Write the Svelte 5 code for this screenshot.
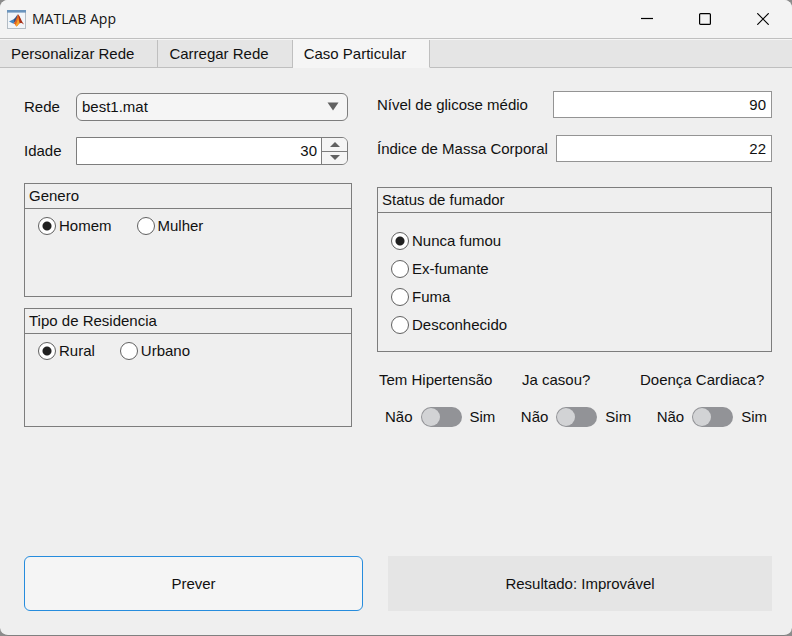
<script>
  const tabs = ['Personalizar Rede', 'Carregar Rede', 'Caso Particular'];
  const statuses = ['Nunca fumou', 'Ex-fumante', 'Fuma', 'Desconhecido'];
  const questions = [
    { id: 'hipertensao', text: 'Tem Hipertensão' },
    { id: 'casou', text: 'Ja casou?' },
    { id: 'cardiaca', text: 'Doença Cardiaca?' }
  ];

  let activeTab = $state('Caso Particular');
  let network = $state('best1.mat');
  let age = $state(30);
  let glucose = $state(90);
  let bmi = $state(22);
  let gender = $state('Homem');
  let residence = $state('Rural');
  let smoking = $state('Nunca fumou');
  let answers = $state({ hipertensao: false, casou: false, cardiaca: false });
</script>

<div class="window">
  <header class="titlebar">
    <svg class="logo" width="19" height="19" viewBox="0 0 19 19" aria-hidden="true">
      <rect x="0.5" y="0.5" width="18" height="18" fill="#f1f5f9" stroke="#b3bcc4" />
      <rect x="0" y="0" width="19" height="2.6" fill="#6a94bd" />
      <path d="M2 11.6 L6.6 9.2 L8.4 11 L6.5 13.8 L4.6 12.8Z" fill="#3f86c4" />
      <path d="M6.6 9.2 C8.4 8.4 9.2 5.6 11 4.2 L9.6 10.4 L7.4 12.8Z" fill="#38507e" />
      <path d="M11 4.2 C9.8 7.2 9 10.6 6.5 13.8 C7.8 13.2 8.4 15 9.4 16.6 C11.6 15.4 11.8 12.8 13.6 13 L12.8 7Z" fill="#e0601f" />
      <path d="M11 4.2 C12.8 5.4 14.4 11.2 17.2 14.6 C15.4 13.2 14.2 12.6 13 13.2 C12 10 12 7.2 11 4.2Z" fill="#a83018" />
      <path d="M11 7 C10.8 10.4 9.8 12.8 8.6 15 L9.4 16.6 C11.2 15.4 11.6 13.8 12.4 13.2Z" fill="#f6a52c" />
    </svg>
    <h1>MATLAB App</h1>
    <div class="controls">
      <button type="button" aria-label="Minimizar">
        <svg width="12" height="12" viewBox="0 0 12 12"><path d="M0 5.5H12" /></svg>
      </button>
      <button type="button" aria-label="Maximizar">
        <svg width="12" height="12" viewBox="0 0 12 12"><rect x="0.6" y="0.6" width="10.8" height="10.8" rx="1" /></svg>
      </button>
      <button type="button" aria-label="Fechar">
        <svg width="12" height="12" viewBox="0 0 12 12"><path d="M0.3 0.3L11.7 11.7M11.7 0.3L0.3 11.7" /></svg>
      </button>
    </div>
  </header>

  <div class="tabs" role="tablist">
    {#each tabs as tab}
      <button type="button" role="tab" class="tab" class:active={tab === activeTab}
        aria-selected={tab === activeTab} onclick={() => (activeTab = tab)}>{tab}</button>
    {/each}
    <div class="tab-rest"></div>
  </div>

  <main>
    <div class="columns">
      <div class="left">
        <div class="fields">
          <div class="field narrow">
            <label for="rede">Rede</label>
            <div class="dropdown">
              <select id="rede" bind:value={network}>
                <option>best1.mat</option>
              </select>
              <svg width="12" height="9" viewBox="0 0 12 9" aria-hidden="true"><path d="M0.5 0.5H11.5L6 8.5Z" /></svg>
            </div>
          </div>
          <div class="field narrow">
            <label for="idade">Idade</label>
            <div class="spinner">
              <input id="idade" type="number" bind:value={age} />
              <div class="steps">
                <button type="button" aria-label="Aumentar" onclick={() => age++}>
                  <svg width="10" height="5" viewBox="0 0 10 5"><path d="M0 5L5 0L10 5Z" /></svg>
                </button>
                <button type="button" aria-label="Diminuir" onclick={() => age--}>
                  <svg width="10" height="5" viewBox="0 0 10 5"><path d="M0 0L5 5L10 0Z" /></svg>
                </button>
              </div>
            </div>
          </div>
        </div>

        <section class="panel gender" role="radiogroup" aria-labelledby="t-genero">
          <h2 id="t-genero">Genero</h2>
          <div class="options">
            {#each ['Homem', 'Mulher'] as g}
              <label class="option"><input type="radio" name="genero" value={g} bind:group={gender} />{g}</label>
            {/each}
          </div>
        </section>

        <section class="panel residence" role="radiogroup" aria-labelledby="t-residencia">
          <h2 id="t-residencia">Tipo de Residencia</h2>
          <div class="options">
            {#each ['Rural', 'Urbano'] as r}
              <label class="option"><input type="radio" name="residencia" value={r} bind:group={residence} />{r}</label>
            {/each}
          </div>
        </section>
      </div>

      <div class="right">
        <div class="fields">
          <div class="field wide">
            <label for="glicose">Nível de glicose médio</label>
            <input id="glicose" type="number" bind:value={glucose} />
          </div>
          <div class="field wide">
            <label for="imc">Índice de Massa Corporal</label>
            <input id="imc" type="number" bind:value={bmi} />
          </div>
        </div>

        <section class="panel smoking" role="radiogroup" aria-labelledby="t-status">
          <h2 id="t-status">Status de fumador</h2>
          <div class="options stacked">
            {#each statuses as s}
              <label class="option"><input type="radio" name="status" value={s} bind:group={smoking} />{s}</label>
            {/each}
          </div>
        </section>

        <div class="questions">
          {#each questions as q}
            <label for={q.id}>{q.text}</label>
          {/each}
        </div>
        <div class="switches">
          {#each questions as q}
            <div class="switch">
              <span>Não</span>
              <input id={q.id} type="checkbox" role="switch" bind:checked={answers[q.id]} />
              <span>Sim</span>
            </div>
          {/each}
        </div>
      </div>
    </div>

    <div class="actions">
      <button type="button" class="predict">Prever</button>
      <output class="result">Resultado: Improvável</output>
    </div>
  </main>
</div>

<style>
  :global(body) {
    margin: 0;
    background: #8c8c8c;
  }

  .window,
  .window * {
    box-sizing: border-box;
  }

  .window {
    display: flex;
    flex-direction: column;
    min-height: 100vh;
    overflow: hidden;
    border-bottom: 1px solid #808080;
    border-radius: 8px;
    background: #efefef;
    color: #111;
    font: 15px/18px "Liberation Sans", Arial, sans-serif;
  }

  button,
  input,
  select {
    margin: 0;
    padding: 0;
    border: 0;
    border-radius: 0;
    background: none;
    color: inherit;
    font: inherit;
  }

  h1,
  h2 {
    margin: 0;
    font-weight: 400;
  }

  /* Title bar */
  .titlebar {
    display: flex;
    align-items: center;
    height: 38px;
    padding-left: 7px;
    background: #f3f3f3;
  }

  .titlebar h1 {
    margin-left: 6px;
    font: 14px/20px "Segoe UI", "Open Sans", sans-serif;
  }

  .controls {
    display: flex;
    align-self: stretch;
    margin-left: auto;
  }

  .controls button {
    display: grid;
    place-items: center;
    width: 58px;
  }

  .controls svg {
    fill: none;
    stroke: #000;
    stroke-width: 1.2;
  }

  /* Tabs */
  .tabs {
    display: flex;
    height: 30px;
    padding-top: 1px;
    border-top: 1px solid #bfbfbf;
    background: #f5f5f5;
  }

  .tab,
  .tab-rest {
    border-bottom: 1px solid #bfbfbf;
    background: #e5e5e5;
  }

  .tab {
    padding: 0 23px 0 11px;
    border-right: 1px solid #bfbfbf;
    white-space: nowrap;
  }

  .tab.active {
    border-bottom-color: #f5f5f5;
    background: #f5f5f5;
  }

  .tab-rest {
    flex: 1;
  }

  main {
    display: flex;
    flex: 1;
    flex-direction: column;
    padding: 23px 20px 24px 24px;
  }

  .columns {
    display: grid;
    grid-template-columns: 328fr 395fr;
    gap: 25px;
  }

  .left {
    padding-top: 2px;
  }

  /* Fields */
  .fields {
    display: flex;
    flex-direction: column;
    gap: 16px;
  }

  .right .fields {
    gap: 17px;
  }

  .field {
    display: flex;
    align-items: center;
  }

  .narrow {
    padding-right: 4px;
  }

  .narrow label {
    width: 52px;
  }

  .wide {
    gap: 8px;
  }

  .wide label {
    min-width: 168px;
    white-space: nowrap;
  }

  .wide input {
    flex: 1;
    min-width: 0;
    height: 27px;
    padding: 0 5px;
    border: 1px solid #949494;
  }

  input[type='number'] {
    appearance: textfield;
    background: #fff;
    text-align: right;
  }

  input[type='number']::-webkit-inner-spin-button {
    display: none;
  }

  .dropdown {
    position: relative;
    flex: 1;
  }

  select {
    display: block;
    width: 100%;
    height: 28px;
    padding: 0 24px 0 5px;
    border: 1px solid #7d7d7d;
    border-radius: 6px;
    appearance: none;
    background: #f5f5f5;
  }

  .dropdown svg {
    position: absolute;
    top: 9px;
    right: 9px;
    fill: #616161;
    pointer-events: none;
  }

  .spinner {
    display: flex;
    flex: 1;
    height: 28px;
    overflow: hidden;
    border: 1px solid #7d7d7d;
    border-radius: 0 6px 6px 0;
  }

  .spinner input {
    flex: 1;
    min-width: 0;
    padding-right: 4px;
  }

  .steps {
    display: flex;
    flex-direction: column;
    width: 26px;
    border-left: 1px solid #7d7d7d;
    background: #f5f5f5;
  }

  .steps button {
    display: grid;
    flex: 1;
    place-items: center;
  }

  .steps button + button {
    border-top: 1px solid #7d7d7d;
  }

  .steps svg {
    fill: #616161;
  }

  /* Panels */
  .panel {
    border: 1px solid #7d7d7d;
  }

  .panel h2 {
    height: 25px;
    padding: 3px 4px;
    border-bottom: 1px solid #7d7d7d;
    font-size: 15px;
    line-height: 18px;
  }

  .gender {
    min-height: 114px;
    margin-top: 18px;
  }

  .residence {
    min-height: 119px;
    margin-top: 11px;
  }

  .smoking {
    min-height: 165px;
    margin-top: 25px;
  }

  .options {
    display: flex;
    gap: 25px;
    padding: 8px 13px;
  }

  .options.stacked {
    flex-direction: column;
    align-items: flex-start;
    gap: 10px;
    padding-top: 19px;
  }

  .option {
    display: flex;
    align-items: center;
    gap: 3px;
  }

  input[type='radio'] {
    width: 18px;
    height: 18px;
    border: 1px solid #616161;
    border-radius: 50%;
    appearance: none;
    background: #fff;
  }

  input[type='radio']:checked {
    background: radial-gradient(circle, #212121 4px, #fff 5px);
  }

  /* Switches */
  .questions {
    display: grid;
    grid-template-columns: 143fr 118fr 125fr;
    margin-top: 19px;
    padding: 0 7px 0 2px;
    white-space: nowrap;
  }

  .switches {
    display: flex;
    justify-content: space-between;
    margin-top: 18px;
    padding: 0 5px 0 8px;
  }

  .switch {
    display: flex;
    align-items: center;
    gap: 8px;
  }

  .switch input {
    width: 41px;
    height: 20px;
    padding: 1px;
    border-radius: 10px;
    appearance: none;
    background: #929397;
  }

  .switch input::before {
    display: block;
    width: 18px;
    height: 18px;
    border-radius: 50%;
    background: #d2d3d5;
    content: '';
  }

  .switch input:checked::before {
    margin-left: auto;
  }

  /* Bottom row */
  .actions {
    display: grid;
    grid-template-columns: 339fr 384fr;
    gap: 25px;
    margin-top: auto;
    padding-top: 24px;
  }

  .predict,
  .result {
    display: grid;
    place-items: center;
    height: 55px;
  }

  .predict {
    border: 1px solid #268cdd;
    border-radius: 6px;
    background: #f5f5f5;
  }

  .result {
    background: #e5e5e5;
  }
</style>
